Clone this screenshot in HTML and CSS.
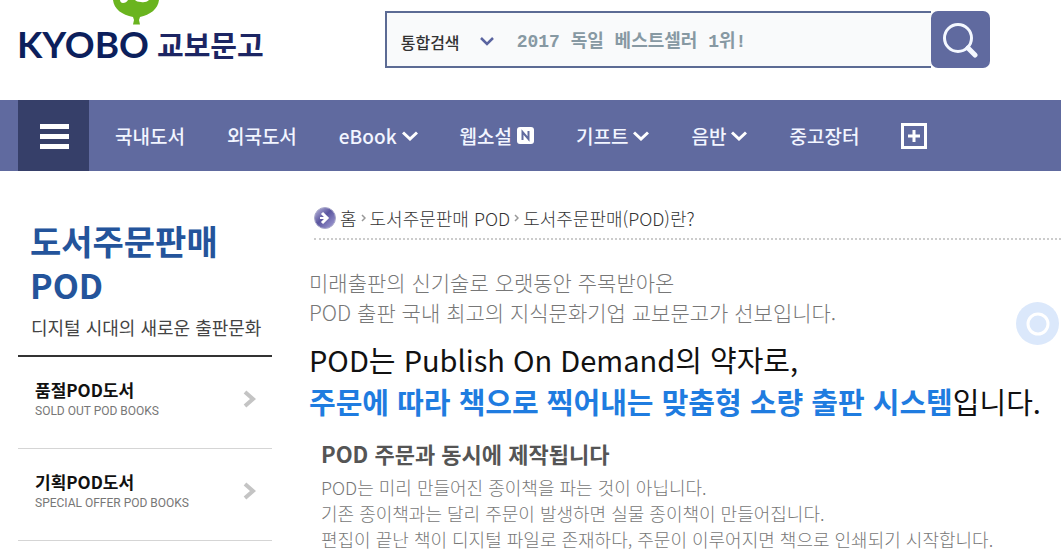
FILE: index.html
```html
<!DOCTYPE html>
<html lang="ko">
<head>
  <meta charset="UTF-8">
  <meta name="viewport" content="width=device-width, initial-scale=1">
  <title>도서주문판매 POD - 교보문고</title>
  <link rel="stylesheet" href="styles.css">
</head>
<body>
  <header class="header">
    <a href="#" class="logo">
      <svg class="logo-mark" width="46" height="25" viewBox="0 0 46 25" aria-hidden="true">
        <path d="M0 0H46C45 9 37 15 27 17L26 20L27 24.500H20L21 20L20 17C9 15 1 9 0 0Z" fill="#6ab41f"/>
        <path d="M7 0H15C14 2 12 3 10 3C8 3 7 1 7 0ZM22 0H36C34 2 31 2.500 28 2C25 2 23 1 22 0Z" fill="#fff"/>
      </svg>
      <span class="logo-en">KYOBO</span>
      <span class="logo-ko">교보문고</span>
    </a>
    <form class="search">
      <button type="button" class="search-type">통합검색
        <svg width="14" height="9" viewBox="0 0 14 9" aria-hidden="true"><path d="M1 1L7 7L13 1" fill="none" stroke="#5a64a0" stroke-width="2.500"/></svg>
      </button>
      <input type="text" class="search-input" aria-label="검색어" placeholder="2017 독일 베스트셀러 1위!">
      <button type="submit" class="search-btn" aria-label="검색">
        <svg width="36" height="36" viewBox="0 0 36 36" aria-hidden="true">
          <circle cx="16" cy="16" r="13.500" fill="none" stroke="#f4f8ff" stroke-width="3"/>
          <path d="M26 26L33 33" stroke="#f4f8ff" stroke-width="5" stroke-linecap="round"/>
        </svg>
      </button>
    </form>
  </header>

  <nav class="nav">
    <button type="button" class="nav-all" aria-label="전체메뉴">
      <svg width="29" height="25" viewBox="0 0 29 25" aria-hidden="true"><path d="M0 2.500H29M0 12.500H29M0 22.500H29" stroke="#fff" stroke-width="5"/></svg>
    </button>
    <ul class="nav-list">
      <li><a href="#">국내도서</a></li>
      <li><a href="#">외국도서</a></li>
      <li><a href="#">eBook <svg width="16" height="10" viewBox="0 0 16 10"><path d="M1 1.500L8 8L15 1.500" fill="none" stroke="#fff" stroke-width="3"/></svg></a></li>
      <li><a href="#">웹소설 <svg width="17" height="17" viewBox="0 0 17 17"><rect width="17" height="17" rx="3" fill="#fff"/><path d="M5.500 13V5L11.500 12V4" fill="none" stroke="#606a9f" stroke-width="2"/></svg></a></li>
      <li><a href="#">기프트 <svg width="16" height="10" viewBox="0 0 16 10"><path d="M1 1.500L8 8L15 1.500" fill="none" stroke="#fff" stroke-width="3"/></svg></a></li>
      <li><a href="#">음반 <svg width="16" height="10" viewBox="0 0 16 10"><path d="M1 1.500L8 8L15 1.500" fill="none" stroke="#fff" stroke-width="3"/></svg></a></li>
      <li><a href="#">중고장터</a></li>
      <li><a href="#" aria-label="더보기"><svg width="26" height="26" viewBox="0 0 26 26"><rect x="1.500" y="1.500" width="23" height="23" fill="none" stroke="#fff" stroke-width="3"/><path d="M13 7V19M7 13H19" stroke="#fff" stroke-width="3"/></svg></a></li>
    </ul>
  </nav>

  <div class="container">
    <aside class="sidebar">
      <h2>도서주문판매<br>POD</h2>
      <p class="slogan">디지털 시대의 새로운 출판문화</p>
      <ul class="side-menu">
        <li>
          <a href="#">
            <span><strong>품절POD도서</strong><small>SOLD OUT POD BOOKS</small></span>
            <svg width="13" height="18" viewBox="0 0 13 18" aria-hidden="true"><path d="M2 2L10 9L2 16" fill="none" stroke="#c4c4c4" stroke-width="4"/></svg>
          </a>
        </li>
        <li>
          <a href="#">
            <span><strong>기획POD도서</strong><small>SPECIAL OFFER POD BOOKS</small></span>
            <svg width="13" height="18" viewBox="0 0 13 18" aria-hidden="true"><path d="M2 2L10 9L2 16" fill="none" stroke="#c4c4c4" stroke-width="4"/></svg>
          </a>
        </li>
      </ul>
    </aside>

    <main class="content">
      <div class="breadcrumb">
        <svg width="22" height="22" viewBox="0 0 22 22" aria-hidden="true">
          <defs>
            <linearGradient id="ball" x1="0" y1="0" x2="1" y2="1">
              <stop offset="0" stop-color="#c3c1e0"/>
              <stop offset="0.450" stop-color="#5a559f"/>
              <stop offset="1" stop-color="#aaa6da"/>
            </linearGradient>
          </defs>
          <circle cx="11" cy="11" r="10.500" fill="url(#ball)" stroke="#aaa9cb"/>
          <path d="M8 6L13 11L8 16" fill="none" stroke="#fff" stroke-width="3"/>
          <path d="M6 11H12" stroke="#fff" stroke-width="2"/>
        </svg>
        <a href="#">홈</a>
        <svg width="5" height="8" viewBox="0 0 5 8"><path d="M1 1L4 4L1 7" fill="none" stroke="#999" stroke-width="1.500"/></svg>
        <a href="#">도서주문판매 POD</a>
        <svg width="5" height="8" viewBox="0 0 5 8"><path d="M1 1L4 4L1 7" fill="none" stroke="#999" stroke-width="1.500"/></svg>
        <a href="#">도서주문판매(POD)란?</a>
      </div>
      <p class="lead">미래출판의 신기술로 오랫동안 주목받아온<br>POD 출판 국내 최고의 지식문화기업 교보문고가 선보입니다.</p>
      <h1>POD는 Publish On Demand의 약자로,<br><em>주문에 따라 책으로 찍어내는 맞춤형 소량 출판 시스템</em>입니다.</h1>
      <section class="detail">
        <h3>POD 주문과 동시에 제작됩니다</h3>
        <p>POD는 미리 만들어진 종이책을 파는 것이 아닙니다.<br>기존 종이책과는 달리 주문이 발생하면 실물 종이책이 만들어집니다.<br>편집이 끝난 책이 디지털 파일로 존재하다, 주문이 이루어지면 책으로 인쇄되기 시작합니다.</p>
      </section>
    </main>
  </div>

  <button type="button" class="float-btn" aria-label="도우미">
    <svg width="24" height="24" viewBox="0 0 24 24" aria-hidden="true"><circle cx="12" cy="12" r="10" fill="none" stroke="#fff" stroke-width="3"/></svg>
  </button>
</body>
</html>
```
FILE: styles.css
```css
* {
  box-sizing: border-box;
}
body {
  margin: 0;
  font-family: "Noto Sans CJK KR", sans-serif;
  background: #fff;
  color: #222;
}
a {
  color: inherit;
  text-decoration: none;
}
button {
  font-family: inherit;
  border: none;
  cursor: pointer;
}
ul {
  list-style: none;
  margin: 0;
  padding: 0;
}
h1, h2, h3, p {
  margin: 0;
  white-space: nowrap;
}
svg {
  flex: none;
}

/* header */
.header {
  display: flex;
  align-items: flex-start;
  gap: 121px;
  height: 100px;
  padding-left: 17px;
}
.logo {
  position: relative;
  display: flex;
  align-items: center;
  gap: 8px;
  padding-top: 24px;
  line-height: 40px;
  font-weight: bold;
  color: #0c1f5c;
}
.logo-mark {
  position: absolute;
  top: 0;
  left: 96px;
}
.logo-en {
  font-family: Lato, sans-serif;
  font-size: 37px;
}
.logo-ko {
  font-size: 29px;
  color: #1c2563;
}
.search {
  display: flex;
  flex: 0 1 605px;
  height: 57px;
  margin-top: 11px;
}
.search-type {
  display: flex;
  align-items: center;
  gap: 20px;
  width: 122px;
  padding: 4px 0 0 14px;
  border: 2px solid #5c6b94;
  border-right: none;
  background: #f9fafb;
  font-size: 16px;
  font-weight: 500;
  color: #333;
}
.search-input {
  flex: 1;
  min-width: 0;
  padding: 4px 10px 0;
  border: solid #5c6b94;
  border-width: 2px 0;
  border-radius: 0;
  background: #f9fafb;
  font-family: "Liberation Mono", "Noto Sans CJK KR", monospace;
  font-size: 18px;
  font-weight: bold;
}
.search-input::placeholder {
  color: #8799a3;
}
.search-btn {
  display: flex;
  align-items: center;
  justify-content: center;
  width: 59px;
  padding: 0;
  border-radius: 7px;
  background: #606a9f;
}

/* nav */
.nav {
  display: flex;
  height: 71px;
  padding-left: 18px;
  background: #606a9f;
}
.nav-all {
  display: flex;
  align-items: center;
  justify-content: center;
  width: 71px;
  padding: 2px 0 0 2px;
  background: #363f69;
}
.nav-list {
  display: flex;
  align-items: center;
  gap: 42px;
  padding-left: 26px;
  font-size: 19px;
  font-weight: 500;
  color: #f2f5ff;
}
.nav-list a {
  display: flex;
  align-items: center;
  gap: 5px;
  white-space: nowrap;
}

/* layout */
.container {
  display: flex;
  gap: 37px;
  padding-left: 18px;
}
.sidebar {
  flex: 0 0 254px;
  padding-top: 48px;
}
.sidebar h2 {
  padding-left: 12px;
  font-size: 34px;
  line-height: 44px;
  color: #24549b;
}
.slogan {
  padding: 6px 0 14px 13px;
  font-size: 18px;
  line-height: 28px;
  color: #444;
}
.side-menu {
  border-top: 2px solid #333;
}
.side-menu li {
  border-bottom: 1px solid #d5d5d5;
}
.side-menu a {
  display: flex;
  align-items: center;
  justify-content: space-between;
  height: 91px;
  padding: 0 16px 8px 17px;
}
.side-menu strong {
  display: block;
  font-size: 17px;
  line-height: 24px;
  color: #111;
}
.side-menu small {
  display: block;
  font-family: Roboto, sans-serif;
  font-size: 12px;
  line-height: 18px;
  color: #777;
}

/* content */
.content {
  flex: 1;
  min-width: 0;
  padding-top: 32px;
}
.breadcrumb {
  display: flex;
  align-items: center;
  gap: 4px;
  height: 37px;
  margin-left: 5px;
  padding-bottom: 6px;
  border-bottom: 2px dotted #ccc;
  font-size: 18px;
  font-weight: 300;
  color: #333;
  white-space: nowrap;
}
.lead {
  padding-top: 27px;
  font-size: 21px;
  line-height: 30px;
  font-weight: 300;
  color: #777;
}
.content h1 {
  padding-top: 11px;
  font-size: 29px;
  line-height: 42px;
  font-weight: 400;
  color: #111;
}
.content h1 em {
  font-style: normal;
  font-weight: bold;
  color: #1f7ce0;
}
.detail {
  padding: 14px 0 0 12px;
}
.detail h3 {
  font-size: 22px;
  line-height: 34px;
  color: #555;
}
.detail p {
  padding-top: 4px;
  font-size: 18px;
  line-height: 26px;
  font-weight: 300;
  color: #777;
}

.float-btn {
  position: fixed;
  top: 302px;
  right: 2px;
  display: flex;
  align-items: center;
  justify-content: center;
  width: 43px;
  height: 43px;
  padding: 0;
  border-radius: 50%;
  background: #dbe8fb;
}
```
